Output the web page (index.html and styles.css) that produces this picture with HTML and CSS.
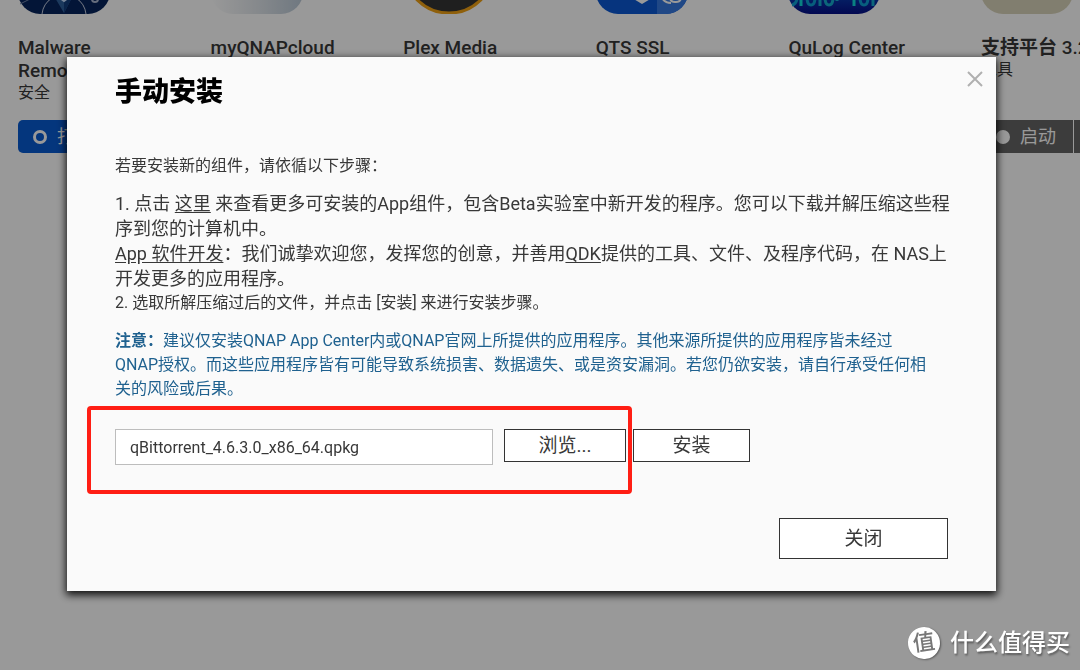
FILE: index.html
```html
<!DOCTYPE html>
<html lang="zh-CN">
<head>
<meta charset="utf-8">
<title>App Center</title>
<link rel="stylesheet" href="styles.css">
</head>
<body>
<main class="apps">
  <article class="app">
    <svg class="app-icon" viewBox="0 78 92 14" aria-hidden="true">
      <rect width="92" height="92" rx="22" fill="#06245c"/>
      <path d="M30 64h30L46 91z" fill="#2e5f9c"/><path d="M46 64h14L46 91z" fill="#123d7c"/>
      <path d="M42 76l4 3 4-3" fill="none" stroke="#c8e0ff" stroke-width="2"/>
      <path d="M24 92a22 22 0 0 1 10-16M68 92a22 22 0 0 0-10-16" fill="none" stroke="#c5cde0"/>
      <circle cx="77" cy="77" r="3" fill="none" stroke="#a9b6d0" stroke-width="2"/>
      <path d="M2 82l10-5" stroke="#7283a8"/>
    </svg>
    <h2 class="app-name">Malware Remover</h2>
    <p class="app-type">安全</p>
    <div class="app-actions"><button class="btn-open"><span class="ring"></span>打开</button></div>
  </article>
  <article class="app">
    <svg class="app-icon" viewBox="0 78 92 14" aria-hidden="true">
      <defs><linearGradient id="cloud"><stop offset="0" stop-color="#ffffff"/><stop offset=".5" stop-color="#e0e5ea"/><stop offset="1" stop-color="#b9c8d6"/></linearGradient></defs>
      <rect width="92" height="92" rx="22" fill="url(#cloud)"/>
    </svg>
    <h2 class="app-name">myQNAPcloud</h2>
  </article>
  <article class="app">
    <svg class="app-icon" viewBox="0 78 92 14" aria-hidden="true">
      <circle cx="46" cy="46" r="45" fill="#343434" stroke="#efa014" stroke-width="3"/>
    </svg>
    <h2 class="app-name">Plex Media</h2>
  </article>
  <article class="app">
    <svg class="app-icon" viewBox="0 78 92 14" aria-hidden="true">
      <defs><clipPath id="tile"><rect width="92" height="92" rx="22"/></clipPath></defs>
      <g clip-path="url(#tile)">
        <path d="M0 0h92v92H0z" fill="#0a58d2"/><path d="M61 0h31v92H61z" fill="#3679e0"/>
        <path d="M36 76l10 6 10-6z" fill="#fff"/>
        <path d="M66 76q3 5 9 5M74 74v1q0 5 5 5h1q5 0 5-5" fill="none" stroke="#fff" stroke-width="2"/>
      </g>
    </svg>
    <h2 class="app-name">QTS SSL</h2>
  </article>
  <article class="app">
    <svg class="app-icon" viewBox="0 78 92 14" aria-hidden="true">
      <defs><linearGradient id="log" x2="0" y2="1"><stop offset=".8" stop-color="#0a3cae"/><stop offset="1" stop-color="#050f86"/></linearGradient></defs>
      <rect width="92" height="92" rx="22" fill="url(#log)"/>
      <g fill="none" stroke-width="3"><path d="M13 74v10M66 74v10" stroke="#0fd8d8"/><path d="M4 83q5-1 5-8M19 75q0 8 4 8t4-8M72 75q0 8 4 8t4-8" stroke="#0c9fd0"/><path d="M32 74v10M37 75q0 8 4 8t4-8M49 74v5M85 74v10" stroke="#14aacb"/></g>
    </svg>
    <h2 class="app-name">QuLog Center</h2>
  </article>
  <article class="app">
    <svg class="app-icon" viewBox="0 78 92 14" aria-hidden="true"><rect width="92" height="92" rx="22" fill="#d8d2b9"/></svg>
    <h2 class="app-name app-name-line"><b>支持平台</b> 3.2</h2>
    <p class="app-type">工具</p>
    <div class="app-actions"><button class="btn-start"><span class="dot"></span>启动</button><button class="btn-more" aria-label="更多"></button></div>
  </article>
</main>

<div class="overlay">
  <section class="dialog" role="dialog" aria-modal="true" aria-labelledby="dialog-title">
    <button class="dialog-x" aria-label="关闭窗口">
      <svg viewBox="0 0 16 16" width="16" height="16"><path d="M1 1l14 14M15 1L1 15" fill="none" stroke="#b0b0b0" stroke-width="2"/></svg>
    </button>
    <h1 class="dialog-title" id="dialog-title">手动安装</h1>
    <p class="intro">若要安装新的组件，请依循以下步骤：</p>
    <div class="steps">
      <p class="step-large">1. 点击 <a href="#">这里</a> 来查看更多可安装的App组件，包含Beta实验室中新开发的程序。您可以下载并解压缩这些程<br>序到您的计算机中。<br><a href="#">App 软件开发</a>：我们诚挚欢迎您，发挥您的创意，并善用<a href="#">QDK</a>提供的工具、文件、及程序代码，在 NAS上<br>开发更多的应用程序。</p>
      <p>2. 选取所解压缩过后的文件，并点击 [安装] 来进行安装步骤。</p>
    </div>
    <p class="notice"><strong>注意：</strong>建议仅安装QNAP App Center内或QNAP官网上所提供的应用程序。其他来源所提供的应用程序皆未经过<br>QNAP授权。而这些应用程序皆有可能导致系统损害、数据遗失、或是资安漏洞。若您仍欲安装，请自行承受任何相<br>关的风险或后果。</p>
    <form class="upload">
      <div class="picker">
        <input class="file-name" type="text" aria-label="安装文件" value="qBittorrent_4.6.3.0_x86_64.qpkg">
        <button class="btn btn-browse" type="button">浏览...</button>
      </div>
      <button class="btn btn-install" type="button">安装</button>
    </form>
    <footer class="dialog-footer"><button class="btn btn-close">关闭</button></footer>
  </section>
</div>

<div class="watermark"><span class="watermark-logo">值</span><span>什么值得买</span></div>
</body>
</html>
```
FILE: styles.css
```css
* { box-sizing: border-box; }
body, h1, h2, p { margin: 0; }
body {
  min-height: 100vh;
  overflow: hidden;
  background: #fff;
  color: #383838;
  font: 16px/24px Roboto, "Noto Sans CJK SC", sans-serif;
}
button, input { font: inherit; color: inherit; }
button { padding: 0; border: 0; cursor: pointer; }

/* App list behind the dialog; the last column runs off the window */
.apps {
  display: grid;
  grid-template-columns: repeat(6, 1fr);
  width: 107%;
  margin-left: 18px;
}
.app-icon { display: block; width: 92px; height: 14px; }
.app-name {
  width: 130px;
  margin-top: 22px;
  font-size: 19px;
  font-weight: 500;
  line-height: 23px;
}
.app-name-line { white-space: nowrap; }
.app-type { line-height: 22px; }
.app { display: flex; flex-direction: column; }
.app-actions { display: flex; gap: 1px; margin-top: auto; padding-top: 16px; }
.app-actions button {
  display: flex;
  align-items: center;
  height: 33px;
  color: #fff;
  font-size: 18px;
}
.app-actions .btn-open {
  gap: 10px;
  width: 130px;
  padding-left: 15px;
  border-radius: 5px;
  background: #085ad0;
}
.app-actions .btn-start {
  gap: 10px;
  width: 92px;
  padding-left: 15px;
  border-radius: 5px 0 0 5px;
  background: #646464;
}
.btn-more { width: 36px; background: #646464; }
.ring { width: 14px; height: 14px; border: 3px solid #fff; border-radius: 50%; }
.dot { width: 14px; height: 14px; border-radius: 50%; background: #fff; }

/* Dialog */
.overlay {
  position: fixed;
  inset: 0;
  padding: 57px 84px 0 67px;
  background: rgba(0, 0, 0, 0.4);
}
.dialog {
  position: relative;
  padding: 14px 48px 32px;
  background: #fafafa;
  box-shadow: 0 3px 8px 1px rgba(0, 0, 0, 0.9);
  white-space: nowrap;
}
.dialog-x {
  position: absolute;
  top: 14px;
  right: 13px;
  display: flex;
  background: none;
}
.dialog-title { color: #000; font-size: 27px; font-weight: 900; line-height: 42px; }
.intro { margin-top: 41px; }
.steps { margin-top: 13px; }
.step-large { font-size: 18px; line-height: 25px; }
.steps a { color: inherit; text-underline-offset: 2px; }
.notice { margin-top: 14px; color: #1f618f; }
.upload { display: flex; gap: 7px; margin-top: 28px; }
.picker { position: relative; display: flex; gap: 11px; }
.picker::after {
  content: "";
  position: absolute;
  inset: -23px -6px -29px -28px;
  border: 4px solid #ff1e14;
  border-radius: 4px;
  pointer-events: none;
}
.file-name {
  width: 378px;
  height: 36px;
  padding: 0 14px;
  border: 1px solid #bdbdbd;
  background: #fff;
}
.btn { border: 1px solid #333; background: #fff; font-size: 19px; }
.btn-browse { width: 122px; height: 33px; }
.btn-install { width: 117px; height: 33px; }
.dialog-footer { display: flex; justify-content: flex-end; margin-top: 53px; }
.btn-close { width: 169px; height: 41px; }

/* Site mark */
.watermark {
  position: fixed;
  right: 10px;
  bottom: 11px;
  display: flex;
  align-items: center;
  gap: 10px;
  color: #fff;
  font-size: 24px;
  font-weight: 500;
  line-height: 32px;
  text-shadow: 1px 2px 2px rgba(0, 0, 0, 0.4);
}
.watermark-logo {
  width: 32px;
  height: 32px;
  border-radius: 50%;
  background: #fff;
  box-shadow: 1px 1px 2px rgba(0, 0, 0, 0.4);
  color: #777;
  font-size: 22px;
  font-weight: 500;
  text-align: center;
  text-shadow: none;
  transform: rotate(-8deg);
}
```
